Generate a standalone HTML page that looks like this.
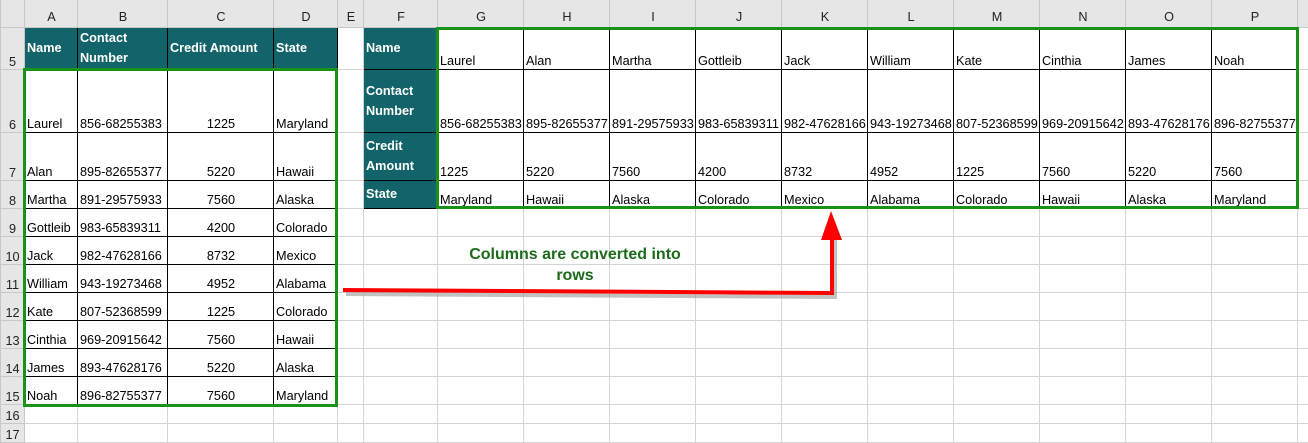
<!DOCTYPE html>
<html><head><meta charset="utf-8"><style>
body{margin:0;width:1308px;height:443px;overflow:hidden;background:#fff;font-family:"Liberation Sans",Arial,sans-serif;position:relative}
table{border-collapse:collapse;table-layout:fixed;position:absolute;left:0;top:-1px;width:1308px}
td{border:1px solid #d4d4d4;padding:0 1px 1px 2px;font-size:12.7px;vertical-align:bottom;white-space:nowrap;overflow:hidden;color:#000;line-height:14px}
tr.h td{background:#e6e6e6;text-align:center;vertical-align:middle;color:#222;border-color:#c8c8c8;padding-top:8px}
td.rh{background:#e6e6e6;color:#222;text-align:center;border-color:#c8c8c8;padding:0}
td.t{background:#13646a;color:#fff;font-weight:bold;border:1px solid #000;vertical-align:middle;line-height:20px;white-space:normal;font-size:12.7px}
td.b{border:1px solid #000}
td.r{text-align:center}
.box{position:absolute;border:3px solid #1a921a;box-sizing:border-box}
</style></head><body>
<table>
<colgroup><col style="width:24px"><col style="width:53px"><col style="width:90px"><col style="width:106px"><col style="width:64px"><col style="width:26px"><col style="width:74px"><col style="width:86px"><col style="width:86px"><col style="width:86px"><col style="width:86px"><col style="width:86px"><col style="width:86px"><col style="width:86px"><col style="width:86px"><col style="width:86px"><col style="width:86px"><col style="width:11px"></colgroup>
<tr class="h" style="height:28px"><td></td><td>A</td><td>B</td><td>C</td><td>D</td><td>E</td><td>F</td><td>G</td><td>H</td><td>I</td><td>J</td><td>K</td><td>L</td><td>M</td><td>N</td><td>O</td><td>P</td><td></td></tr>
<tr style="height:41px"><td class="rh" style="vertical-align:bottom">5</td><td class="t">Name</td><td class="t">Contact Number</td><td class="t">Credit Amount</td><td class="t">State</td><td></td><td class="t">Name</td><td class="b">Laurel</td><td class="b">Alan</td><td class="b">Martha</td><td class="b">Gottleib</td><td class="b">Jack</td><td class="b">William</td><td class="b">Kate</td><td class="b">Cinthia</td><td class="b">James</td><td class="b">Noah</td><td></td></tr>
<tr style="height:63px"><td class="rh" style="vertical-align:bottom">6</td><td class="b">Laurel</td><td class="b">856-68255383</td><td class="b r">1225</td><td class="b">Maryland</td><td></td><td class="t">Contact Number</td><td class="b">856-68255383</td><td class="b">895-82655377</td><td class="b">891-29575933</td><td class="b">983-65839311</td><td class="b">982-47628166</td><td class="b">943-19273468</td><td class="b">807-52368599</td><td class="b">969-20915642</td><td class="b">893-47628176</td><td class="b">896-82755377</td><td></td></tr>
<tr style="height:48px"><td class="rh" style="vertical-align:bottom">7</td><td class="b">Alan</td><td class="b">895-82655377</td><td class="b r">5220</td><td class="b">Hawaii</td><td></td><td class="t">Credit Amount</td><td class="b">1225</td><td class="b">5220</td><td class="b">7560</td><td class="b">4200</td><td class="b">8732</td><td class="b">4952</td><td class="b">1225</td><td class="b">7560</td><td class="b">5220</td><td class="b">7560</td><td></td></tr>
<tr style="height:28px"><td class="rh" style="vertical-align:bottom">8</td><td class="b">Martha</td><td class="b">891-29575933</td><td class="b r">7560</td><td class="b">Alaska</td><td></td><td class="t">State</td><td class="b">Maryland</td><td class="b">Hawaii</td><td class="b">Alaska</td><td class="b">Colorado</td><td class="b">Mexico</td><td class="b">Alabama</td><td class="b">Colorado</td><td class="b">Hawaii</td><td class="b">Alaska</td><td class="b">Maryland</td><td></td></tr>
<tr style="height:28px"><td class="rh" style="vertical-align:bottom">9</td><td class="b">Gottleib</td><td class="b">983-65839311</td><td class="b r">4200</td><td class="b">Colorado</td><td></td><td></td><td></td><td></td><td></td><td></td><td></td><td></td><td></td><td></td><td></td><td></td><td></td></tr>
<tr style="height:28px"><td class="rh" style="vertical-align:bottom">10</td><td class="b">Jack</td><td class="b">982-47628166</td><td class="b r">8732</td><td class="b">Mexico</td><td></td><td></td><td></td><td></td><td></td><td></td><td></td><td></td><td></td><td></td><td></td><td></td><td></td></tr>
<tr style="height:28px"><td class="rh" style="vertical-align:bottom">11</td><td class="b">William</td><td class="b">943-19273468</td><td class="b r">4952</td><td class="b">Alabama</td><td></td><td></td><td></td><td></td><td></td><td></td><td></td><td></td><td></td><td></td><td></td><td></td><td></td></tr>
<tr style="height:28px"><td class="rh" style="vertical-align:bottom">12</td><td class="b">Kate</td><td class="b">807-52368599</td><td class="b r">1225</td><td class="b">Colorado</td><td></td><td></td><td></td><td></td><td></td><td></td><td></td><td></td><td></td><td></td><td></td><td></td><td></td></tr>
<tr style="height:28px"><td class="rh" style="vertical-align:bottom">13</td><td class="b">Cinthia</td><td class="b">969-20915642</td><td class="b r">7560</td><td class="b">Hawaii</td><td></td><td></td><td></td><td></td><td></td><td></td><td></td><td></td><td></td><td></td><td></td><td></td><td></td></tr>
<tr style="height:28px"><td class="rh" style="vertical-align:bottom">14</td><td class="b">James</td><td class="b">893-47628176</td><td class="b r">5220</td><td class="b">Alaska</td><td></td><td></td><td></td><td></td><td></td><td></td><td></td><td></td><td></td><td></td><td></td><td></td><td></td></tr>
<tr style="height:28px"><td class="rh" style="vertical-align:bottom">15</td><td class="b">Noah</td><td class="b">896-82755377</td><td class="b r">7560</td><td class="b">Maryland</td><td></td><td></td><td></td><td></td><td></td><td></td><td></td><td></td><td></td><td></td><td></td><td></td><td></td></tr>
<tr style="height:19px"><td class="rh">16</td><td></td><td></td><td></td><td></td><td></td><td></td><td></td><td></td><td></td><td></td><td></td><td></td><td></td><td></td><td></td><td></td><td></td></tr>
<tr style="height:19px"><td class="rh">17</td><td></td><td></td><td></td><td></td><td></td><td></td><td></td><td></td><td></td><td></td><td></td><td></td><td></td><td></td><td></td><td></td><td></td></tr>
</table>
<div class="box" style="left:23px;top:68px;width:315px;height:339px"></div>
<div class="box" style="left:436px;top:27px;width:863px;height:182px"></div>
<svg style="position:absolute;left:0;top:0" width="1308" height="443">
<g fill="none" stroke="#999" stroke-width="4" opacity="0.6"><polyline points="346,294 835,297 835,240"/></g>
<polyline points="343,290 832,293 832,238" fill="none" stroke="#f00" stroke-width="4"/>
<polygon points="831,211 821,240 842,240" fill="#f00"/>
</svg>
<div style="position:absolute;left:440px;top:244px;width:270px;text-align:center;color:#1b6b1b;font-weight:bold;font-size:16px;line-height:21px">Columns are converted into<br>rows</div>
</body></html>
